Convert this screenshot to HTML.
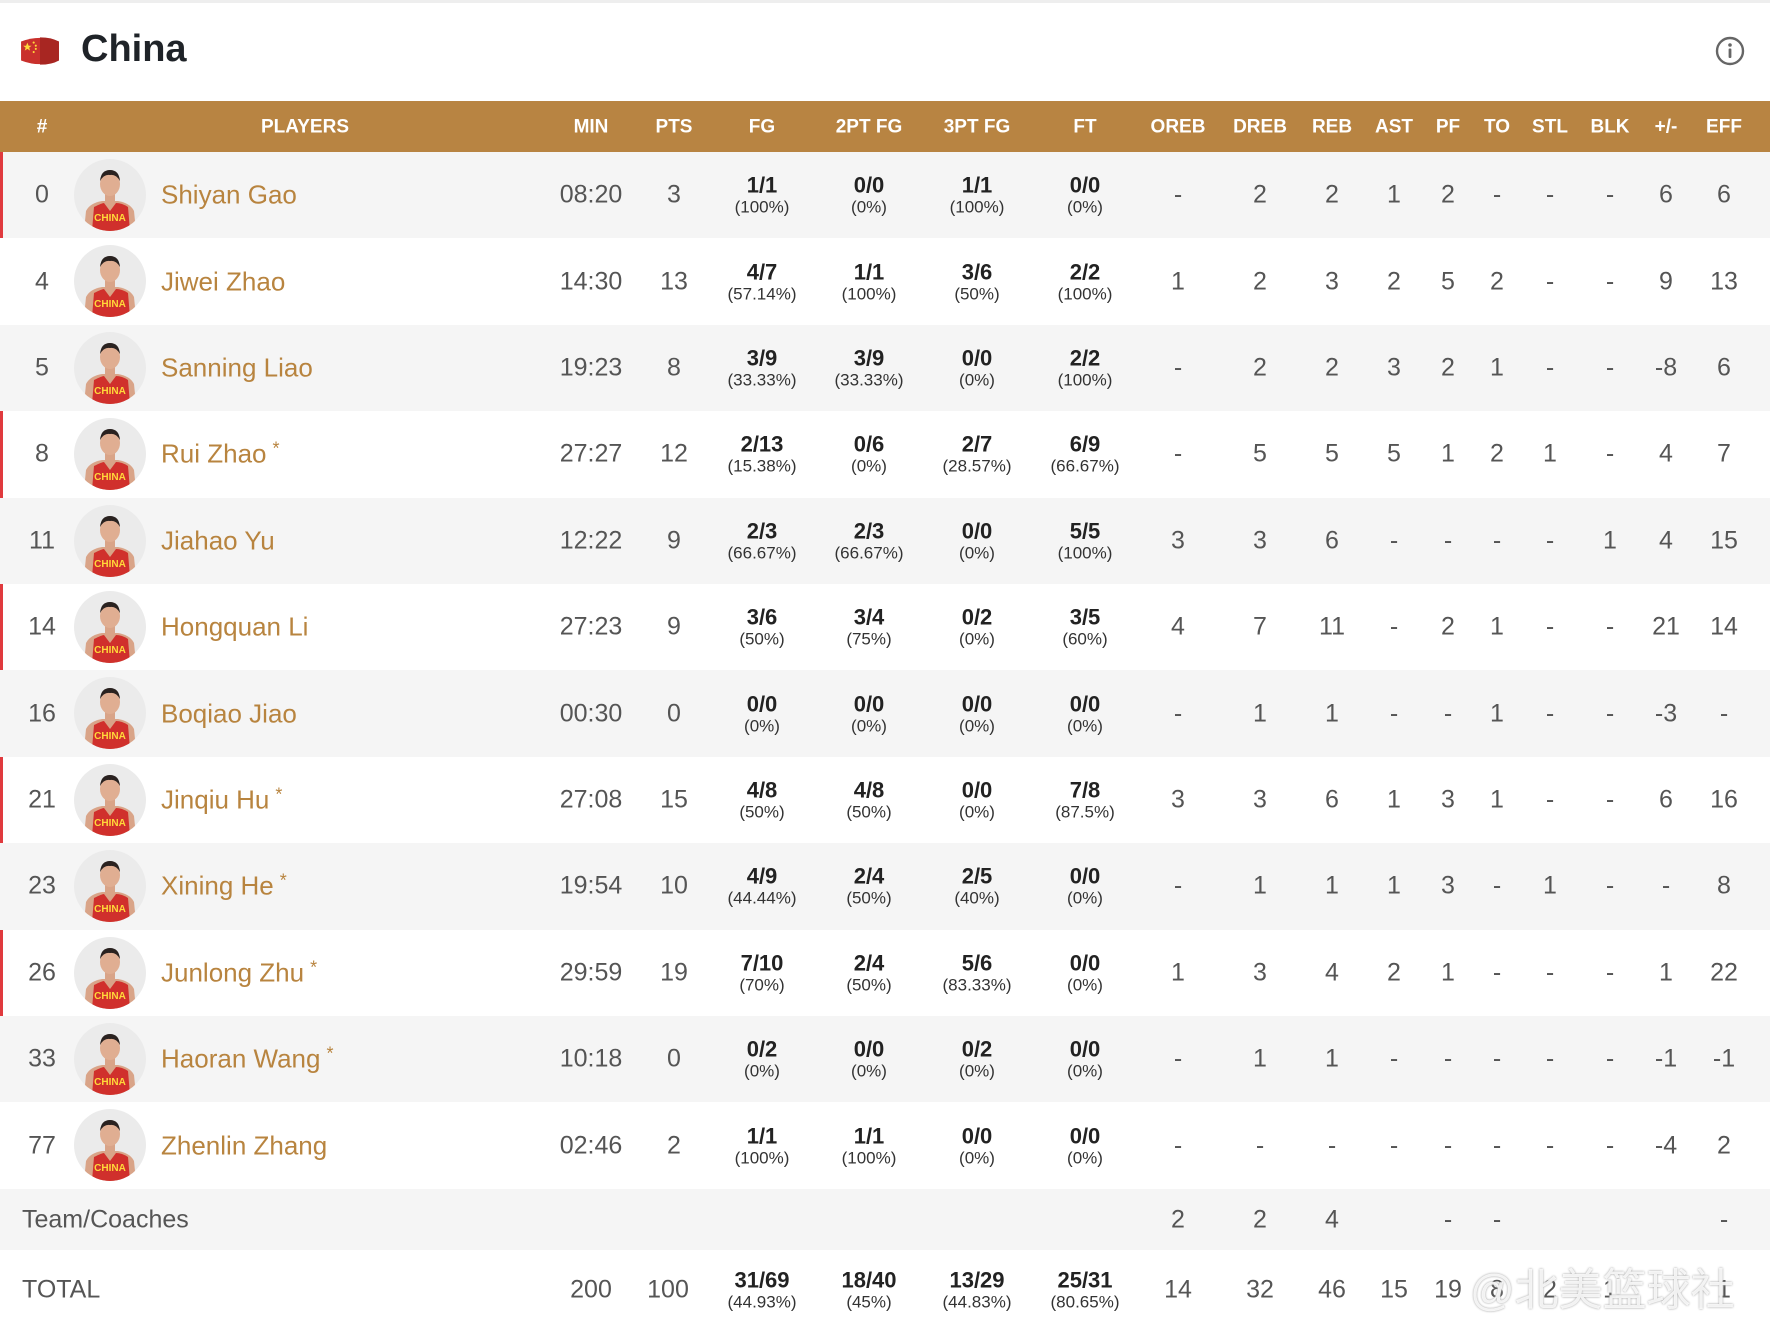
<!DOCTYPE html>
<html><head><meta charset="utf-8">
<style>
*{margin:0;padding:0;box-sizing:border-box}
body{width:1770px;height:1316px;overflow:hidden;background:#fff;font-family:"Liberation Sans",Arial,sans-serif;position:relative}
.top{position:absolute;left:0;top:0;width:1770px;height:3px;background:#eee}
.title{position:absolute;left:81px;top:28px;font-size:38px;font-weight:bold;color:#1f2328}
.hdr{position:absolute;left:0;top:101px;width:1770px;height:51px;background:#b88442;color:#fff;font-weight:bold;font-size:19px}
.row{position:absolute;left:0;width:1770px;height:86.4px}
.g{background:#f5f5f5}
.red{box-shadow:inset 3px 0 0 #e03a3e}
.c{position:absolute;width:110px;text-align:center;top:50%;transform:translateY(-50%);color:#555;font-size:25px;line-height:1}
.hdr .c{color:#fff;font-size:19px}
.f{line-height:1}
.f b{display:block;font-size:22px;color:#222}
.f i{display:block;font-style:normal;font-size:17px;color:#333;margin-top:2px}
.nm{position:absolute;left:161px;top:50%;transform:translateY(-50%);font-size:26px;color:#b8843f}
.nm s{text-decoration:none;font-size:18px;vertical-align:8px;margin-left:6px}
.av{position:absolute;left:74px;top:7px;width:72px;height:72px}
.a0{left:-13px}.a1{left:536px}.a2{left:619px}.a3{left:707px}.a4{left:814px}.a5{left:922px}.a6{left:1030px}.a7{left:1123px}.a8{left:1205px}.a9{left:1277px}.a10{left:1339px}.a11{left:1393px}.a12{left:1442px}.a13{left:1495px}.a14{left:1555px}.a15{left:1611px}.a16{left:1669px}
</style></head><body>
<div class="top"></div>
<svg style="position:absolute;left:20px;top:35px" width="40" height="32" viewBox="0 0 38 30"><path d="M1 6 Q19 -1 37 6 L37 24 Q19 31 1 24 Z" fill="#c9302c"/><path d="M19 2 Q30 2 37 6 L37 24 Q30 28 19 28Z" fill="#a82622"/><polygon points="7,7 8.2,10 11,10 8.7,11.8 9.6,14.6 7,13 4.5,14.6 5.4,11.8 3,10 5.8,10" fill="#ffd83a"/><circle cx="13" cy="7" r="1" fill="#ffd83a"/><circle cx="15" cy="10" r="1" fill="#ffd83a"/><circle cx="15" cy="13" r="1" fill="#ffd83a"/><circle cx="13" cy="16" r="1" fill="#ffd83a"/></svg>
<div class="title">China</div>
<svg style="position:absolute;left:1715px;top:36px" width="30" height="30" viewBox="0 0 30 30"><circle cx="15" cy="15" r="13" fill="none" stroke="#666" stroke-width="2.4"/><circle cx="15" cy="9" r="1.8" fill="#666"/><rect x="13.6" y="12.5" width="2.8" height="9.5" rx="1" fill="#666"/></svg>

<svg width="0" height="0" style="position:absolute"><defs><symbol id="p" viewBox="0 0 72 72"><circle cx="36" cy="36" r="36" fill="#ebebeb"/><clipPath id="cl"><circle cx="36" cy="36" r="36"/></clipPath><g clip-path="url(#cl)"><path d="M10 72 L12 52 Q16 44 28 42 L44 42 Q56 44 60 52 L62 72Z" fill="#d9a488"/><path d="M18 72 L20 48 Q28 44 30 44 L36 52 L42 44 Q48 44 54 48 L56 72Z" fill="#d0302c"/><text x="36" y="62" font-size="10" font-weight="bold" fill="#ffd83a" text-anchor="middle" font-family="Liberation Sans">CHINA</text><rect x="31" y="34" width="10" height="9" fill="#d9a488"/><ellipse cx="36" cy="25" rx="10" ry="12" fill="#e0ae92"/><path d="M26 22 Q27 11 36 11 Q45 11 46 22 Q42 15 36 16 Q30 15 26 22Z" fill="#2a2220"/></g></symbol></defs></svg>

<div class="hdr">
<div class="c a0">#</div><div class="c" style="left:250px">PLAYERS</div>
<div class="c a1">MIN</div><div class="c a2">PTS</div><div class="c a3">FG</div><div class="c a4">2PT FG</div><div class="c a5">3PT FG</div><div class="c a6">FT</div><div class="c a7">OREB</div><div class="c a8">DREB</div><div class="c a9">REB</div><div class="c a10">AST</div><div class="c a11">PF</div><div class="c a12">TO</div><div class="c a13">STL</div><div class="c a14">BLK</div><div class="c a15">+/-</div><div class="c a16">EFF</div>
</div>

<div class="row g red" style="top:152px"><div class="c a0">0</div><svg class="av"><use href="#p"/></svg><div class="nm">Shiyan Gao</div><div class="c a1">08:20</div><div class="c a2">3</div><div class="c a3 f"><b>1/1</b><i>(100%)</i></div><div class="c a4 f"><b>0/0</b><i>(0%)</i></div><div class="c a5 f"><b>1/1</b><i>(100%)</i></div><div class="c a6 f"><b>0/0</b><i>(0%)</i></div><div class="c a7">-</div><div class="c a8">2</div><div class="c a9">2</div><div class="c a10">1</div><div class="c a11">2</div><div class="c a12">-</div><div class="c a13">-</div><div class="c a14">-</div><div class="c a15">6</div><div class="c a16">6</div></div>

<div class="row" style="top:238.4px"><div class="c a0">4</div><svg class="av"><use href="#p"/></svg><div class="nm">Jiwei Zhao</div><div class="c a1">14:30</div><div class="c a2">13</div><div class="c a3 f"><b>4/7</b><i>(57.14%)</i></div><div class="c a4 f"><b>1/1</b><i>(100%)</i></div><div class="c a5 f"><b>3/6</b><i>(50%)</i></div><div class="c a6 f"><b>2/2</b><i>(100%)</i></div><div class="c a7">1</div><div class="c a8">2</div><div class="c a9">3</div><div class="c a10">2</div><div class="c a11">5</div><div class="c a12">2</div><div class="c a13">-</div><div class="c a14">-</div><div class="c a15">9</div><div class="c a16">13</div></div>

<div class="row g" style="top:324.8px"><div class="c a0">5</div><svg class="av"><use href="#p"/></svg><div class="nm">Sanning Liao</div><div class="c a1">19:23</div><div class="c a2">8</div><div class="c a3 f"><b>3/9</b><i>(33.33%)</i></div><div class="c a4 f"><b>3/9</b><i>(33.33%)</i></div><div class="c a5 f"><b>0/0</b><i>(0%)</i></div><div class="c a6 f"><b>2/2</b><i>(100%)</i></div><div class="c a7">-</div><div class="c a8">2</div><div class="c a9">2</div><div class="c a10">3</div><div class="c a11">2</div><div class="c a12">1</div><div class="c a13">-</div><div class="c a14">-</div><div class="c a15">-8</div><div class="c a16">6</div></div>

<div class="row red" style="top:411.2px"><div class="c a0">8</div><svg class="av"><use href="#p"/></svg><div class="nm">Rui Zhao<s>*</s></div><div class="c a1">27:27</div><div class="c a2">12</div><div class="c a3 f"><b>2/13</b><i>(15.38%)</i></div><div class="c a4 f"><b>0/6</b><i>(0%)</i></div><div class="c a5 f"><b>2/7</b><i>(28.57%)</i></div><div class="c a6 f"><b>6/9</b><i>(66.67%)</i></div><div class="c a7">-</div><div class="c a8">5</div><div class="c a9">5</div><div class="c a10">5</div><div class="c a11">1</div><div class="c a12">2</div><div class="c a13">1</div><div class="c a14">-</div><div class="c a15">4</div><div class="c a16">7</div></div>

<div class="row g" style="top:497.6px"><div class="c a0">11</div><svg class="av"><use href="#p"/></svg><div class="nm">Jiahao Yu</div><div class="c a1">12:22</div><div class="c a2">9</div><div class="c a3 f"><b>2/3</b><i>(66.67%)</i></div><div class="c a4 f"><b>2/3</b><i>(66.67%)</i></div><div class="c a5 f"><b>0/0</b><i>(0%)</i></div><div class="c a6 f"><b>5/5</b><i>(100%)</i></div><div class="c a7">3</div><div class="c a8">3</div><div class="c a9">6</div><div class="c a10">-</div><div class="c a11">-</div><div class="c a12">-</div><div class="c a13">-</div><div class="c a14">1</div><div class="c a15">4</div><div class="c a16">15</div></div>

<div class="row red" style="top:584px"><div class="c a0">14</div><svg class="av"><use href="#p"/></svg><div class="nm">Hongquan Li</div><div class="c a1">27:23</div><div class="c a2">9</div><div class="c a3 f"><b>3/6</b><i>(50%)</i></div><div class="c a4 f"><b>3/4</b><i>(75%)</i></div><div class="c a5 f"><b>0/2</b><i>(0%)</i></div><div class="c a6 f"><b>3/5</b><i>(60%)</i></div><div class="c a7">4</div><div class="c a8">7</div><div class="c a9">11</div><div class="c a10">-</div><div class="c a11">2</div><div class="c a12">1</div><div class="c a13">-</div><div class="c a14">-</div><div class="c a15">21</div><div class="c a16">14</div></div>

<div class="row g" style="top:670.4px"><div class="c a0">16</div><svg class="av"><use href="#p"/></svg><div class="nm">Boqiao Jiao</div><div class="c a1">00:30</div><div class="c a2">0</div><div class="c a3 f"><b>0/0</b><i>(0%)</i></div><div class="c a4 f"><b>0/0</b><i>(0%)</i></div><div class="c a5 f"><b>0/0</b><i>(0%)</i></div><div class="c a6 f"><b>0/0</b><i>(0%)</i></div><div class="c a7">-</div><div class="c a8">1</div><div class="c a9">1</div><div class="c a10">-</div><div class="c a11">-</div><div class="c a12">1</div><div class="c a13">-</div><div class="c a14">-</div><div class="c a15">-3</div><div class="c a16">-</div></div>

<div class="row red" style="top:756.8px"><div class="c a0">21</div><svg class="av"><use href="#p"/></svg><div class="nm">Jinqiu Hu<s>*</s></div><div class="c a1">27:08</div><div class="c a2">15</div><div class="c a3 f"><b>4/8</b><i>(50%)</i></div><div class="c a4 f"><b>4/8</b><i>(50%)</i></div><div class="c a5 f"><b>0/0</b><i>(0%)</i></div><div class="c a6 f"><b>7/8</b><i>(87.5%)</i></div><div class="c a7">3</div><div class="c a8">3</div><div class="c a9">6</div><div class="c a10">1</div><div class="c a11">3</div><div class="c a12">1</div><div class="c a13">-</div><div class="c a14">-</div><div class="c a15">6</div><div class="c a16">16</div></div>

<div class="row g" style="top:843.2px"><div class="c a0">23</div><svg class="av"><use href="#p"/></svg><div class="nm">Xining He<s>*</s></div><div class="c a1">19:54</div><div class="c a2">10</div><div class="c a3 f"><b>4/9</b><i>(44.44%)</i></div><div class="c a4 f"><b>2/4</b><i>(50%)</i></div><div class="c a5 f"><b>2/5</b><i>(40%)</i></div><div class="c a6 f"><b>0/0</b><i>(0%)</i></div><div class="c a7">-</div><div class="c a8">1</div><div class="c a9">1</div><div class="c a10">1</div><div class="c a11">3</div><div class="c a12">-</div><div class="c a13">1</div><div class="c a14">-</div><div class="c a15">-</div><div class="c a16">8</div></div>

<div class="row red" style="top:929.6px"><div class="c a0">26</div><svg class="av"><use href="#p"/></svg><div class="nm">Junlong Zhu<s>*</s></div><div class="c a1">29:59</div><div class="c a2">19</div><div class="c a3 f"><b>7/10</b><i>(70%)</i></div><div class="c a4 f"><b>2/4</b><i>(50%)</i></div><div class="c a5 f"><b>5/6</b><i>(83.33%)</i></div><div class="c a6 f"><b>0/0</b><i>(0%)</i></div><div class="c a7">1</div><div class="c a8">3</div><div class="c a9">4</div><div class="c a10">2</div><div class="c a11">1</div><div class="c a12">-</div><div class="c a13">-</div><div class="c a14">-</div><div class="c a15">1</div><div class="c a16">22</div></div>

<div class="row g" style="top:1016px"><div class="c a0">33</div><svg class="av"><use href="#p"/></svg><div class="nm">Haoran Wang<s>*</s></div><div class="c a1">10:18</div><div class="c a2">0</div><div class="c a3 f"><b>0/2</b><i>(0%)</i></div><div class="c a4 f"><b>0/0</b><i>(0%)</i></div><div class="c a5 f"><b>0/2</b><i>(0%)</i></div><div class="c a6 f"><b>0/0</b><i>(0%)</i></div><div class="c a7">-</div><div class="c a8">1</div><div class="c a9">1</div><div class="c a10">-</div><div class="c a11">-</div><div class="c a12">-</div><div class="c a13">-</div><div class="c a14">-</div><div class="c a15">-1</div><div class="c a16">-1</div></div>

<div class="row" style="top:1102.4px"><div class="c a0">77</div><svg class="av"><use href="#p"/></svg><div class="nm">Zhenlin Zhang</div><div class="c a1">02:46</div><div class="c a2">2</div><div class="c a3 f"><b>1/1</b><i>(100%)</i></div><div class="c a4 f"><b>1/1</b><i>(100%)</i></div><div class="c a5 f"><b>0/0</b><i>(0%)</i></div><div class="c a6 f"><b>0/0</b><i>(0%)</i></div><div class="c a7">-</div><div class="c a8">-</div><div class="c a9">-</div><div class="c a10">-</div><div class="c a11">-</div><div class="c a12">-</div><div class="c a13">-</div><div class="c a14">-</div><div class="c a15">-4</div><div class="c a16">2</div></div>

<div class="row g" style="top:1189px;height:61px"><div class="c" style="left:22px;width:auto;text-align:left">Team/Coaches</div><div class="c a7">2</div><div class="c a8">2</div><div class="c a9">4</div><div class="c a11">-</div><div class="c a12">-</div><div class="c a16">-</div></div>

<div class="row" style="top:1250px;height:80px"><div class="c" style="left:22px;width:auto;text-align:left">TOTAL</div><div class="c a1">200</div><div class="c" style="left:613px">100</div><div class="c a3 f"><b>31/69</b><i>(44.93%)</i></div><div class="c a4 f"><b>18/40</b><i>(45%)</i></div><div class="c a5 f"><b>13/29</b><i>(44.83%)</i></div><div class="c a6 f"><b>25/31</b><i>(80.65%)</i></div><div class="c a7">14</div><div class="c a8">32</div><div class="c a9">46</div><div class="c a10">15</div><div class="c a11">19</div><div class="c a12">8</div><div class="c a13">2</div><div class="c a14">1</div><div class="c a16">1</div></div>

<div style="position:absolute;left:1470px;top:1254px;font-family:'Liberation Sans','Noto Sans CJK SC',sans-serif;font-size:44px;color:rgba(255,255,255,0.85);text-shadow:0 0 2px #999">@北美篮球社</div>
</body></html>
